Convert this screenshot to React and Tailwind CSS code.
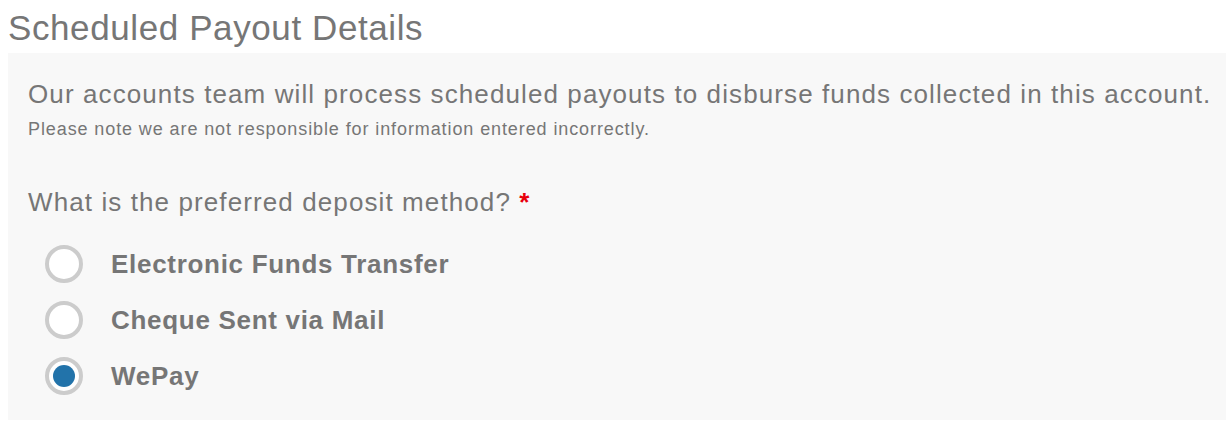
export default function App() {
  const options = [
    { id: "eft", label: "Electronic Funds Transfer" },
    { id: "cheque", label: "Cheque Sent via Mail" },
    { id: "wepay", label: "WePay" },
  ];
  const selected = "wepay";

  return (
    <div className="w-[1226px] h-[422px] bg-white pl-2 pt-2 text-[#767676] font-['Liberation_Sans',Arial,sans-serif]">
      <h1 className="text-[35px] leading-[40px] tracking-[0.6px]">Scheduled Payout Details</h1>
      <div className="mt-[5px] bg-[#f8f8f8] h-[367px] pl-5 pt-[25px]">
        <p className="text-[26px] leading-[32px] tracking-[1.1px] whitespace-nowrap">
          Our accounts team will process scheduled payouts to disburse funds collected in this account.
        </p>
        <p className="text-[18px] leading-[24px] tracking-[0.9px] mt-[7px]">
          Please note we are not responsible for information entered incorrectly.
        </p>
        <p className="text-[26px] leading-[32px] tracking-[1.1px] mt-[45px]">
          What is the preferred deposit method? <span className="text-[#e8000b] font-bold">*</span>
        </p>
        <div className="mt-[27px] pl-[17px] flex flex-col gap-[18px]">
          {options.map((o) => (
            <label key={o.id} className="flex items-center gap-[28px] h-[38px]">
              <span className="w-[38px] h-[38px] rounded-full border-[4px] border-[#cccccc] bg-white flex items-center justify-center">
                {selected === o.id && <span className="w-[22px] h-[22px] rounded-full bg-[#2273aa]" />}
              </span>
              <span className="text-[26px] font-bold leading-[32px] tracking-[0.7px]">{o.label}</span>
            </label>
          ))}
        </div>
      </div>
    </div>
  );
}
